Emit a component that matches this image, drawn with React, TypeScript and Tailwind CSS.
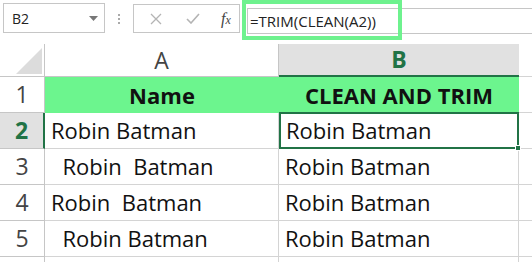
import React from 'react';

const rows = [
  { n: '1', a: 'Name', b: 'CLEAN AND TRIM', head: true },
  { n: '2', a: 'Robin Batman', b: 'Robin Batman', sel: true },
  { n: '3', a: '  Robin  Batman', b: 'Robin Batman' },
  { n: '4', a: 'Robin  Batman', b: 'Robin Batman' },
  { n: '5', a: '  Robin Batman', b: 'Robin Batman' },
];

const FormulaBar: React.FC = () => (
  <div className="relative flex h-[44px] items-start">
    <div className="ml-[3px] mt-[3px] flex h-[30px] w-[102px] items-center justify-between border border-[#c6c6c6] pl-[8px] pr-[6px] text-[14px] text-[#222]">
      <span>B2</span>
      <svg width="9" height="5" viewBox="0 0 9 5"><path d="M0 0h9L4.5 5z" fill="#777" /></svg>
    </div>
    <div className="ml-[13px] mt-[14px] flex flex-col gap-[2px]">
      <span className="h-[2px] w-[2px] bg-[#aaa]" />
      <span className="h-[2px] w-[2px] bg-[#aaa]" />
      <span className="h-[2px] w-[2px] bg-[#aaa]" />
    </div>
    <div className="ml-[13px] mt-[4px] flex h-[29px] w-[107px] items-center border border-[#c6c6c6] pl-[16px]">
      <svg width="12" height="12" viewBox="0 0 12 12"><path d="M1 1l10 10M11 1L1 11" stroke="#b4b4b4" strokeWidth="1.3" /></svg>
      <svg className="ml-[24px]" width="14" height="11" viewBox="0 0 14 11"><path d="M1 6l4 4 8-9" stroke="#b4b4b4" strokeWidth="1.6" fill="none" /></svg>
      <span className="ml-[21px] text-[16px] italic text-[#444]" style={{ fontFamily: '"Liberation Serif", serif' }}>f<span className="text-[12px]">x</span></span>
    </div>
    <div className="ml-[7px] mt-[8px] flex h-[26px] flex-1 items-center border-y border-l border-[#c6c6c6] pl-[2px] text-[15px] text-[#222]">
      =TRIM(CLEAN(A2))
    </div>
    <div className="absolute left-[242px] top-0 h-[40px] w-[160px] border-[4px] border-[#6ef28e]" />
  </div>
);

export default function App() {
  return (
    <div className="h-[262px] w-[532px] overflow-hidden bg-white" style={{ fontFamily: '"Open Sans", "Liberation Sans", sans-serif' }}>
      <FormulaBar />
      <div className="grid grid-cols-[45px_234px_240px_1fr] grid-rows-[33px_36px_36px_36px_36px_36px_36px] text-[#111]">
        <div className="relative border-b border-r border-[#c6c6c6]">
          <svg className="absolute left-[16px] top-[4px]" width="26" height="26" viewBox="0 0 26 26"><path d="M26 0v26H0z" fill="#dcdcdc" /></svg>
        </div>
        <div className="flex items-center justify-center border-b border-r border-[#c6c6c6] text-[23px] text-[#444]">A</div>
        <div className="flex items-center justify-center border-b-2 border-[#217346] bg-[#e1e1e1] text-[23px] font-bold text-[#217346]">B</div>
        <div className="border-b border-[#d4d4d4]" />
        {rows.map((r) => (
          <React.Fragment key={r.n}>
            <div
              className={
                r.sel
                  ? 'flex items-center justify-center border-b border-r-2 border-b-[#c6c6c6] border-r-[#217346] bg-[#e1e1e1] text-[23px] font-bold text-[#217346]'
                  : 'flex items-center justify-center border-b border-r border-[#c6c6c6] text-[23px] text-[#444]'
              }
            >
              {r.n}
            </div>
            {r.head ? (
              <>
                <div className="flex items-center justify-center bg-[#6cf58e] text-[22px] font-bold">{r.a}</div>
                <div className="flex items-center justify-center bg-[#6cf58e] text-[22px] font-bold">{r.b}</div>
              </>
            ) : (
              <>
                <div className="flex items-center whitespace-pre border-b border-r border-[#d4d4d4] pl-[6px] text-[22px]">{r.a}</div>
                <div className={r.sel ? 'relative -mt-px flex items-center border-2 border-[#217346] pl-[5px] text-[22px]' : 'flex items-center border-b border-r border-[#d4d4d4] pl-[6px] text-[22px]'}>
                  {r.b}
                  {r.sel && <span className="absolute -bottom-[4px] -right-[4px] h-[6px] w-[6px] border border-white bg-[#217346]" />}
                </div>
              </>
            )}
            <div className="border-b border-[#d4d4d4]" />
          </React.Fragment>
        ))}
        <div className="border-r border-[#c6c6c6]" />
        <div className="border-r border-[#d4d4d4]" />
        <div className="border-r border-[#d4d4d4]" />
        <div />
      </div>
    </div>
  );
}
